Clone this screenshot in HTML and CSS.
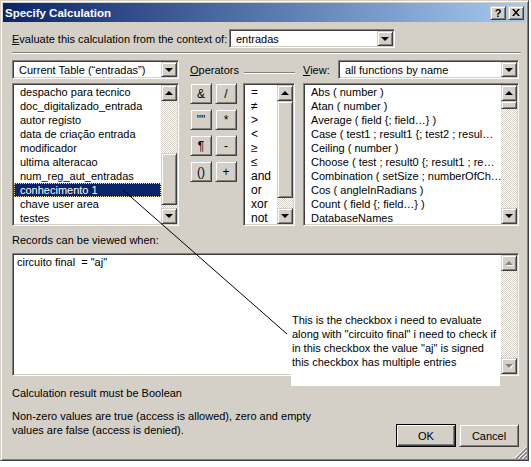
FILE: index.html
```html
<!DOCTYPE html>
<html lang="en">

<head>
  <meta charset="UTF-8">
  <title>Specify Calculation</title>
  <link rel="stylesheet" href="styles.css">
</head>

<body>
  <div class="window">
    <div class="titlebar">
      <span class="title">Specify Calculation</span>
      <div class="caption-btns">
        <span class="cap-btn help">?</span>
        <span class="cap-btn">
          <svg width="8" height="7" viewBox="0 0 8 7"><path d="M0 0h2l2 2.5L6 0h2L5 3.5 8 7H6L4 4.5 2 7H0l3-3.5z" fill="#000"/></svg>
        </span>
      </div>
    </div>

    <div class="content">
      <div class="context-row">
        <label class="context-label"><u>E</u>valuate this calculation from the context of:</label>
        <div class="combo context-combo">
          <span class="combo-text">entradas</span>
          <span class="drop-btn"><i class="arrow down"></i></span>
        </div>
      </div>

      <div class="separator"></div>

      <div class="columns">
        <!-- fields -->
        <div class="col-fields">
          <div class="combo">
            <span class="combo-text">Current Table (“entradas”)</span>
            <span class="drop-btn"><i class="arrow down"></i></span>
          </div>
          <div class="listbox">
            <ul class="items">
              <li>despacho para tecnico</li>
              <li>doc_digitalizado_entrada</li>
              <li>autor registo</li>
              <li>data de criação entrada</li>
              <li>modificador</li>
              <li>ultima alteracao</li>
              <li>num_reg_aut_entradas</li>
              <li class="selected">conhecimento 1</li>
              <li>chave user area</li>
              <li>testes</li>
            </ul>
            <div class="scrollbar">
              <span class="sb-btn"><i class="arrow up"></i></span>
              <span class="sb-track"><span class="thumb thumb-fields"></span></span>
              <span class="sb-btn"><i class="arrow down"></i></span>
            </div>
          </div>
        </div>

        <!-- operators -->
        <div class="col-ops">
          <div class="col-header">
            <span><u>O</u>perators</span>
            <span class="group-line"></span>
          </div>
          <div class="ops-body">
            <div class="op-grid">
              <span class="op-btn">&amp;</span>
              <span class="op-btn">/</span>
              <span class="op-btn">""</span>
              <span class="op-btn">*</span>
              <span class="op-btn">¶</span>
              <span class="op-btn">-</span>
              <span class="op-btn">()</span>
              <span class="op-btn">+</span>
            </div>
            <div class="listbox op-list">
              <ul class="items">
                <li>=</li>
                <li>≠</li>
                <li>&gt;</li>
                <li>&lt;</li>
                <li>≥</li>
                <li>≤</li>
                <li>and</li>
                <li>or</li>
                <li>xor</li>
                <li>not</li>
              </ul>
              <div class="scrollbar">
                <span class="sb-btn"><i class="arrow up"></i></span>
                <span class="sb-track"><span class="thumb thumb-ops"></span></span>
                <span class="sb-btn"><i class="arrow down"></i></span>
              </div>
            </div>
          </div>
        </div>

        <!-- functions -->
        <div class="col-funcs">
          <div class="col-header">
            <span><u>V</u>iew:</span>
            <div class="combo view-combo">
              <span class="combo-text">all functions by name</span>
              <span class="drop-btn"><i class="arrow down"></i></span>
            </div>
          </div>
          <div class="listbox">
            <ul class="items">
              <li>Abs ( number )</li>
              <li>Atan ( number )</li>
              <li>Average ( field {; field…} )</li>
              <li>Case ( test1 ; result1 {; test2 ; resul…</li>
              <li>Ceiling ( number )</li>
              <li>Choose ( test ; result0 {; result1 ; re…</li>
              <li>Combination ( setSize ; numberOfCh…</li>
              <li>Cos ( angleInRadians )</li>
              <li>Count ( field {; field…} )</li>
              <li>DatabaseNames</li>
            </ul>
            <div class="scrollbar">
              <span class="sb-btn"><i class="arrow up"></i></span>
              <span class="sb-track"><span class="thumb thumb-funcs"></span></span>
              <span class="sb-btn"><i class="arrow down"></i></span>
            </div>
          </div>
        </div>
      </div>

      <p class="records-label">Records can be viewed when:</p>
      <div class="expr-box">
        <div class="expr">circuito final  = "aj"</div>
        <div class="scrollbar disabled">
          <span class="sb-btn"><i class="arrow up"></i></span>
          <span class="sb-track"></span>
          <span class="sb-btn"><i class="arrow down"></i></span>
        </div>
      </div>

      <p class="result-note">Calculation result must be Boolean</p>
      <div class="footer">
        <p class="note">Non-zero values are true (access is allowed), zero and empty<br>values are false (access is denied).</p>
        <div class="dialog-btns">
          <span class="btn default">OK</span>
          <span class="btn">Cancel</span>
        </div>
      </div>
    </div>

    <!-- pasted annotation -->
    <div class="annotation">This is the checkbox i need to evaluate<br>along with "circuito final" i need to check if<br>in this checkbox the value "aj" is signed<br>this checkbox has multiple entries</div>
    <svg class="pointer" width="529" height="461" viewBox="0 0 529 461">
      <line x1="123" y1="190" x2="287" y2="334" stroke="#000" stroke-width="1"/>
    </svg>

    <svg class="grip" width="12" height="12" viewBox="0 0 12 12">
      <path d="M11 0L0 11M11 4L4 11M11 8L8 11" stroke="#fff" stroke-width="1"/>
      <path d="M12 1L1 12M12 5L5 12M12 9L9 12" stroke="#808080" stroke-width="1.4"/>
    </svg>
  </div>
</body>

</html>
```

FILE: styles.css
```css
* {
  box-sizing: border-box;
}

body {
  margin: 0;
  background: #fff;
  font-family: "Liberation Sans", Arial, sans-serif;
  font-size: 11px;
  color: #000;
}

p {
  margin: 0;
}

ul {
  margin: 0;
  padding: 0;
  list-style: none;
}

.window {
  position: relative;
  width: 529px;
  height: 461px;
  padding: 2px;
  background: #d4d0c8;
  border: 1px solid;
  border-color: #d4d0c8 #404040 #404040 #d4d0c8;
  box-shadow: inset 1px 1px #fff, inset -1px -1px #808080;
}

/* title bar */
.titlebar {
  height: 19px;
  display: flex;
  align-items: center;
  justify-content: space-between;
  padding: 0 2px;
  background: linear-gradient(to right, #0a246a, #a6caf0);
}

.title {
  color: #fff;
  font-weight: bold;
  font-size: 11.5px;
}

.caption-btns {
  display: flex;
  gap: 2px;
}

.cap-btn {
  width: 16px;
  height: 14px;
  display: flex;
  align-items: center;
  justify-content: center;
  font-weight: bold;
  font-size: 11px;
  background: #d4d0c8;
  border: 1px solid;
  border-color: #d4d0c8 #404040 #404040 #d4d0c8;
  box-shadow: inset 1px 1px #fff, inset -1px -1px #808080;
}

/* shared 3d bits */
.drop-btn,
.sb-btn,
.thumb,
.op-btn,
.btn {
  background: #d4d0c8;
  border: 1px solid;
  border-color: #d4d0c8 #404040 #404040 #d4d0c8;
  box-shadow: inset 1px 1px #fff, inset -1px -1px #808080;
}

.combo,
.listbox,
.expr-box {
  background: #fff;
  border: 1px solid;
  border-color: #808080 #fff #fff #808080;
  box-shadow: inset 1px 1px #404040, inset -1px -1px #d4d0c8;
  padding: 1px;
}

.arrow {
  display: block;
  width: 0;
  height: 0;
  border-left: 4px solid transparent;
  border-right: 4px solid transparent;
}

.arrow.down {
  border-top: 4px solid #000;
}

.arrow.up {
  border-bottom: 4px solid #000;
}

/* content */
.content {
  padding: 7px 7px 0 9px;
}

.context-row {
  display: flex;
  align-items: center;
  height: 19px;
}

.context-label {
  width: 217px;
}

.combo {
  height: 19px;
  display: flex;
  align-items: center;
}

.context-combo {
  width: 166px;
}

.combo-text {
  flex: 1;
  padding-left: 5px;
  white-space: nowrap;
  overflow: hidden;
}

.drop-btn {
  width: 16px;
  height: 15px;
  display: flex;
  align-items: center;
  justify-content: center;
}

.separator {
  height: 2px;
  margin: 4px -2px 0 0;
  border-top: 1px solid #808080;
  border-bottom: 1px solid #fff;
}

.columns {
  display: flex;
  margin-top: 6px;
}

.col-fields {
  width: 167px;
}

.col-ops {
  width: 105px;
  margin-left: 11px;
}

.col-funcs {
  width: 216px;
  margin-left: 8px;
}

.col-header {
  height: 19px;
  display: flex;
  align-items: center;
}

.group-line {
  flex: 1;
  height: 2px;
  margin: 6px 0 0 5px;
  border-top: 1px solid #808080;
  border-bottom: 1px solid #fff;
}

.view-combo {
  width: 181px;
  margin-left: auto;
}

/* list boxes */
.listbox {
  height: 143px;
  margin-top: 4px;
  display: flex;
}

.items {
  flex: 1;
  overflow: hidden;
}

.items li {
  height: 14px;
  line-height: 14px;
  padding-left: 6px;
  white-space: nowrap;
  overflow: hidden;
}

.items li.selected {
  background: #0a246a;
  color: #fff;
  outline: 1px dotted #e8d8a0;
  outline-offset: -1px;
}

.scrollbar {
  width: 16px;
  display: flex;
  flex-direction: column;
}

.sb-btn {
  height: 16px;
  display: flex;
  align-items: center;
  justify-content: center;
}

.sb-track {
  flex: 1;
  display: flex;
  flex-direction: column;
  background-image: conic-gradient(#fff 25%, #d4d0c8 0 50%, #fff 0 75%, #d4d0c8 0);
  background-size: 2px 2px;
}

.thumb {
  display: block;
}

.thumb-fields {
  margin-top: 52px;
  height: 52px;
}

.thumb-ops {
  height: 97px;
}

.thumb-funcs {
  height: 8px;
}

.scrollbar.disabled .arrow.up {
  border-bottom-color: #808080;
  filter: drop-shadow(1px 1px 0 #fff);
}

.scrollbar.disabled .arrow.down {
  border-top-color: #808080;
  filter: drop-shadow(1px 1px 0 #fff);
}

/* operators */
.ops-body {
  display: flex;
  margin-top: 4px;
}

.op-grid {
  display: grid;
  grid-template-columns: 22px 22px;
  grid-auto-rows: 21px;
  column-gap: 3px;
  row-gap: 5px;
  align-content: start;
}

.op-btn {
  display: flex;
  align-items: center;
  justify-content: center;
  font-size: 12px;
}

.op-list {
  width: 52px;
  margin-top: 0;
  margin-left: 6px;
}

.op-list .items li {
  padding-left: 6px;
  font-size: 12px;
}

/* expression */
.records-label {
  margin-top: 8px;
  line-height: 13px;
}

.expr-box {
  height: 123px;
  margin-top: 6px;
  display: flex;
}

.expr {
  flex: 1;
  padding: 1px 3px;
  line-height: 13px;
  white-space: pre;
}

.result-note {
  margin-top: 11px;
  line-height: 13px;
}

.footer {
  display: flex;
  justify-content: space-between;
  margin-top: 9px;
}

.note {
  line-height: 14px;
}

.dialog-btns {
  display: flex;
  gap: 3px;
  margin-top: 15px;
}

.btn {
  width: 60px;
  height: 23px;
  display: flex;
  align-items: center;
  justify-content: center;
}

.btn.default {
  border-color: #000;
  box-shadow: inset 1px 1px #fff, inset -1px -1px #404040, inset -2px -2px #808080;
}

/* overlays */
.annotation {
  position: absolute;
  left: 290px;
  top: 300px;
  width: 209px;
  height: 85px;
  padding: 12px 0 0 1px;
  background: #fff;
  line-height: 14px;
  white-space: nowrap;
}

.pointer {
  position: absolute;
  left: -1px;
  top: -1px;
  pointer-events: none;
}

.grip {
  position: absolute;
  right: 1px;
  bottom: 1px;
}
```
